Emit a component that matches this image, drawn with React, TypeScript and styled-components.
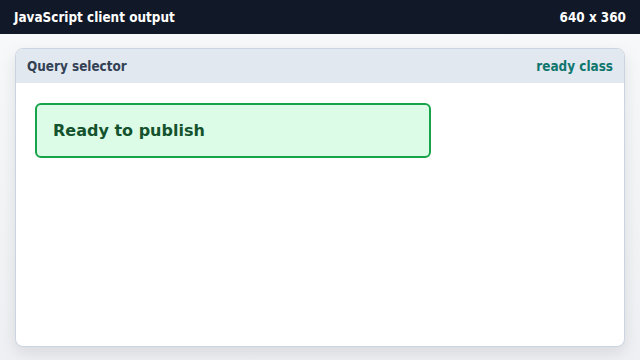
import React from "react";
import styled, { createGlobalStyle } from "styled-components";

const Global = createGlobalStyle`
  html, body { margin: 0; padding: 0; }
  body {
    width: 640px; height: 360px; overflow: hidden;
    background: #f3f4f6;
    font-family: "DejaVu Sans Condensed", "DejaVu Sans", sans-serif;
  }
`;

const Page = styled.div`
  width: 640px;
  height: 360px;
  display: flex;
  flex-direction: column;
  background: linear-gradient(#f8f9fa, #eef0f3);
`;

const TopBar = styled.div`
  height: 34px;
  flex: none;
  background: #111827;
  color: #ffffff;
  display: flex;
  align-items: center;
  justify-content: space-between;
  padding: 0 14px 0 14px;
  font-size: 13.4px;
  font-weight: 700;
`;

const Main = styled.div`
  flex: 1;
  padding: 14px 15px 13px 15px;
  display: flex;
`;

const Card = styled.section`
  flex: 1;
  display: flex;
  flex-direction: column;
  background: #ffffff;
  border: 1px solid #cbd5e1;
  border-radius: 8px;
  overflow: hidden;
  box-shadow: 0 6px 16px rgba(15, 23, 42, 0.1);
`;

const CardHeader = styled.header`
  height: 34px;
  flex: none;
  background: #e2e8f0;
  display: flex;
  align-items: center;
  justify-content: space-between;
  padding: 0 11px 0 11px;
  font-size: 13.4px;
  font-weight: 700;
`;

const Title = styled.span`
  color: #334155;
`;

const Status = styled.span`
  color: #0f766e;
`;

const CardBody = styled.div`
  padding: 20px 19px;
  display: flex;
  align-items: flex-start;
`;

const Notice = styled.div<{ $ready: boolean }>`
  width: 396px;
  height: 55px;
  box-sizing: border-box;
  display: flex;
  align-items: center;
  padding: 0 16px;
  border-radius: 6px;
  border: 2px solid ${(p) => (p.$ready ? "#16a34a" : "#cbd5e1")};
  background: ${(p) => (p.$ready ? "#dcfce7" : "#f8fafc")};
  color: ${(p) => (p.$ready ? "#14532d" : "#334155")};
  font-family: "DejaVu Sans", sans-serif;
  font-weight: 700;
  font-size: 16px;
`;

export default function App() {
  return (
    <>
      <Global />
      <Page>
        <TopBar>
          <span>JavaScript client output</span>
          <span>640 x 360</span>
        </TopBar>
        <Main>
          <Card>
            <CardHeader>
              <Title>Query selector</Title>
              <Status>ready class</Status>
            </CardHeader>
            <CardBody>
              <Notice $ready>Ready to publish</Notice>
            </CardBody>
          </Card>
        </Main>
      </Page>
    </>
  );
}
